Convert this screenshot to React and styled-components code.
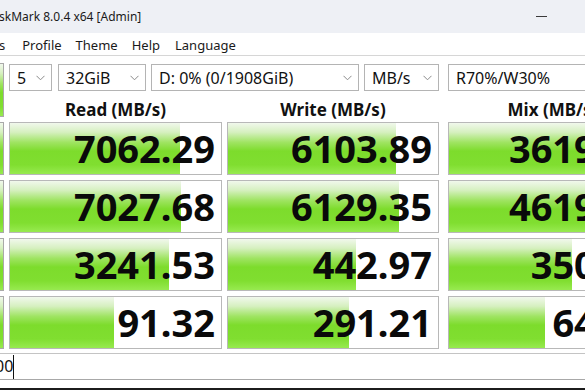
import React from 'react';
import styled, { createGlobalStyle } from 'styled-components';

const GlobalStyle = createGlobalStyle`
  html, body {
    margin: 0;
    padding: 0;
    background: #fff;
  }
  body {
    width: 585px;
    height: 390px;
    overflow: hidden;
    font-family: "Noto Sans", "Open Sans", sans-serif;
    color: #111;
  }
`;

const greenGradient = `linear-gradient(to bottom, #f1f8ec 0%, #d6f0c0 18%, #9fe462 38%, #7ddc2c 55%, #80de30 82%, #97ea50 100%)`;

const Window = styled.div`
  width: 585px;
  height: 390px;
  display: flex;
  flex-direction: column;
  overflow: hidden;
`;

const TitleBar = styled.div`
  height: 33px;
  background: #eef0f5;
  display: flex;
  align-items: center;
  justify-content: space-between;
  flex-shrink: 0;
`;

const Title = styled.span`
  font-size: 12px;
  color: #1a1a1a;
  margin-left: -1px;
`;

const Minimize = styled.span`
  width: 11px;
  height: 1px;
  background: #3a3a3a;
  margin-right: 38px;
  margin-bottom: 1px;
`;

const MenuBar = styled.div`
  height: 23px;
  box-sizing: border-box;
  border-bottom: 1px solid #d6d6d6;
  display: flex;
  align-items: center;
  flex-shrink: 0;
`;

const MenuItem = styled.span`
  font-size: 13px;
  color: #1a1a1a;
  margin-left: ${({ $first }) => ($first ? '-1px' : '0')};
  margin-right: ${({ $gap }) => $gap}px;
  padding-top: 1px;
`;

const Main = styled.div`
  display: grid;
  grid-template-columns: 4px 213px 212px 213px;
  grid-template-rows: 28px 21px repeat(4, 53px);
  column-gap: 5px;
  row-gap: 5px;
  padding-top: 7px;
`;

const AllButton = styled.div`
  grid-column: 1;
  grid-row: 1 / 3;
  box-sizing: border-box;
  border: 1px solid #a9a9a9;
  border-left: none;
  background: ${greenGradient};
`;

const Controls = styled.div`
  grid-column: 2 / -1;
  grid-row: 1;
  display: flex;
  align-items: flex-start;
  padding-top: 1px;
`;

const Select = styled.div`
  box-sizing: border-box;
  width: ${({ $w }) => $w}px;
  height: 27px;
  margin-right: ${({ $gap }) => $gap || 0}px;
  flex-shrink: 0;
  border: 1px solid #b4b4b4;
  background: #fff;
  display: flex;
  align-items: center;
  justify-content: space-between;
  padding: 0 6px 0 7px;
  font-size: 16px;
  color: #111;
  white-space: nowrap;
  overflow: hidden;
`;

const Chevron = () => (
  <svg width="9" height="6" viewBox="0 0 9 6" style={{ flexShrink: 0 }}>
    <path d="M0.5 0.8 L4.5 4.8 L8.5 0.8" fill="none" stroke="#8a8a8a" strokeWidth="1" />
  </svg>
);

const Header = styled.div`
  grid-row: 2;
  font-size: 17px;
  font-weight: 700;
  text-align: center;
  line-height: 21px;
  padding-top: 3px;
  margin-left: ${({ $shift }) => $shift || 0}px;
  white-space: nowrap;
`;

const Label = styled.div`
  grid-column: 1;
  box-sizing: border-box;
  border: 1px solid #a9a9a9;
  border-left: none;
  background: ${greenGradient};
`;

const Cell = styled.div`
  position: relative;
  box-sizing: border-box;
  border: 1px solid #b8b8b8;
  background: #fff;
  margin-left: ${({ $shift }) => $shift || 0}px;
  display: flex;
  align-items: center;
  justify-content: flex-end;
  padding-right: 6px;
  overflow: hidden;
`;

const Fill = styled.div`
  position: absolute;
  left: 0;
  top: 0;
  bottom: 0;
  background: ${greenGradient};
`;

const Value = styled.span`
  position: relative;
  font-size: 38px;
  font-weight: 700;
  color: #0a0a0a;
  line-height: 1;
  padding-bottom: 2px;
  white-space: nowrap;
`;

const Comment = styled.div`
  margin-top: 4px;
  height: 27px;
  box-sizing: border-box;
  border-top: 1px solid #c4c4c4;
  border-bottom: 1px solid #a8a8a8;
  display: flex;
  align-items: center;
  font-size: 16px;
  color: #111;
  flex-shrink: 0;
`;

const CommentText = styled.span`
  margin-left: -5px;
  padding-bottom: 1px;
`;

const Caret = styled.span`
  width: 1px;
  height: 24px;
  background: #111;
`;

const Taskbar = styled.div`
  margin-top: auto;
  height: 2px;
  flex-shrink: 0;
  background: #1c1c1c;
`;

const menus = [
  { label: 's', gap: 17 },
  { label: 'Profile', gap: 14 },
  { label: 'Theme', gap: 14 },
  { label: 'Help', gap: 15 },
  { label: 'Language', gap: 0 },
];

const rows = [
  [{ v: '7062.29', f: 80.6 }, { v: '6103.89', f: 80 }, { v: '3619.95', f: 77 }],
  [{ v: '7027.68', f: 81 }, { v: '6129.35', f: 81.5 }, { v: '4619.04', f: 79 }],
  [{ v: '3241.53', f: 75.4 }, { v: '442.97', f: 61 }, { v: '350.41', f: 59.5 }],
  [{ v: '91.32', f: 49.3 }, { v: '291.21', f: 57.8 }, { v: '64.57', f: 46.5 }],
];

export default function App() {
  return (
    <>
      <GlobalStyle />
      <Window>
        <TitleBar>
          <Title>skMark 8.0.4 x64 [Admin]</Title>
          <Minimize />
        </TitleBar>
        <MenuBar>
          {menus.map((m, i) => (
            <MenuItem key={m.label} $first={i === 0} $gap={m.gap}>
              {m.label}
            </MenuItem>
          ))}
        </MenuBar>
        <Main>
          <AllButton />
          <Controls>
            <Select $w={43} $gap={6}>5<Chevron /></Select>
            <Select $w={88} $gap={5}>32GiB<Chevron /></Select>
            <Select $w={208} $gap={5}>D: 0% (0/1908GiB)<Chevron /></Select>
            <Select $w={75} $gap={9}>MB/s<Chevron /></Select>
            <Select $w={213}>R70%/W30%<Chevron /></Select>
          </Controls>
          <Header>Read (MB/s)</Header>
          <Header>Write (MB/s)</Header>
          <Header $shift={4}>Mix (MB/s)</Header>
          {rows.map((row, r) => (
            <React.Fragment key={r}>
              <Label />
              {row.map((c, i) => (
                <Cell key={i} $shift={i === 2 ? 4 : 0}>
                  <Fill style={{ width: `${c.f}%` }} />
                  <Value>{c.v}</Value>
                </Cell>
              ))}
            </React.Fragment>
          ))}
        </Main>
        <Comment>
          <CommentText>00</CommentText>
          <Caret />
        </Comment>
        <Taskbar />
      </Window>
    </>
  );
}
